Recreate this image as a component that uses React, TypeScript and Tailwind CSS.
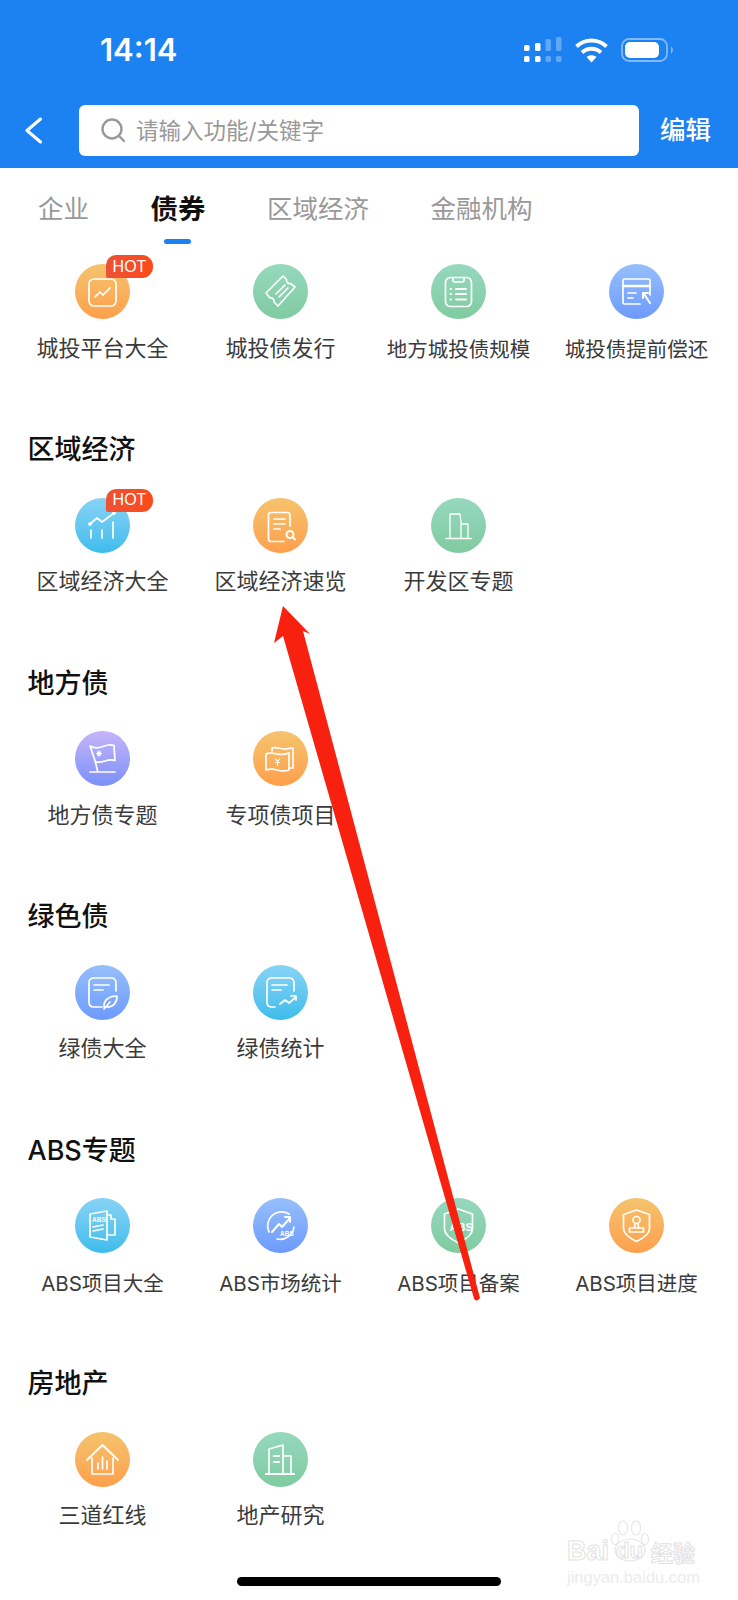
import type { ReactNode } from 'react'

type Tone = 'orange' | 'green' | 'blue' | 'sky' | 'purple'

const tones: Record<Tone, string> = {
  orange: 'bg-linear-to-b from-[#f5c36d] to-[#fd9f4c]',
  green: 'bg-linear-to-b from-[#96d8bf] to-[#80cba0]',
  blue: 'bg-linear-to-b from-[#97bffb] to-[#6d9afb]',
  sky: 'bg-linear-to-b from-[#86d3f5] to-[#3bbcec]',
  purple: 'bg-linear-to-b from-[#c6b4f8] to-[#7b90f8]',
}

const Glyph = ({ children }: { children: ReactNode }) => (
  <svg viewBox="0 0 55 55" className="w-[55px] h-[55px]" fill="none" stroke="white" strokeWidth="1.7" strokeLinecap="round" strokeLinejoin="round">
    {children}
  </svg>
)

const icons: Record<string, ReactNode> = {
  platform: (
    <Glyph>
      <rect x="14" y="15" width="27" height="27" rx="5" />
      <path d="M20 33l5-5 3 3 7-7" />
    </Glyph>
  ),
  ticket: (
    <Glyph>
      <path d="M13 29L30 12l3.500 3.500c-.5 2.500 1.500 4.500 4 4L42 23 25 42l-4-4c.5-2.500-1.500-4.500-4-4z" />
      <path d="M23 30l9-9M26 33l9-9" />
    </Glyph>
  ),
  clipboard: (
    <Glyph>
      <rect x="14.500" y="13.500" width="26" height="29" rx="5" />
      <path d="M22 13.500v3c0 1 .5 1.500 1.500 1.500h8c1 0 1.500-.5 1.500-1.500v-3" />
      <path d="M25 25h10M25 30h10M25 35.500h10M19.500 25h.6M19.500 30h.6M19.500 35.500h.6" strokeWidth="2" />
    </Glyph>
  ),
  card: (
    <Glyph>
      <path d="M41 31V16.500c0-1-.5-1.500-1.500-1.500h-24c-1 0-1.500.5-1.500 1.500v22c0 1 .5 1.500 1.500 1.500H31" />
      <path d="M14 22h27" strokeWidth="2.400" />
      <path d="M19 29h8M19 34h5" />
      <path d="M34 29h5M34 29v5M35 30l6 9" strokeWidth="2" />
    </Glyph>
  ),
  chart: (
    <Glyph>
      <path d="M15 26l7-6 5 4 12-9" />
      <path d="M16 32v8M27 32v8M38 24v16" />
      <circle cx="15" cy="26" r="1" fill="white" />
      <circle cx="39" cy="15" r="1" fill="white" />
    </Glyph>
  ),
  docSearch: (
    <Glyph>
      <path d="M37 28V17c0-1.500-.8-2.500-2.500-2.500H18c-1.500 0-2.500 1-2.500 2.500v24c0 1.500 1 2.500 2.500 2.500h13" />
      <path d="M21 21h11M21 26h11M21 31h6" />
      <circle cx="37" cy="36.500" r="3.500" strokeWidth="2" />
      <path d="M40 39.500l2 2" strokeWidth="2" />
    </Glyph>
  ),
  building: (
    <Glyph>
      <path d="M15 40.500h25" />
      <path d="M19 40V16h10l1 8v16M30 26h7v14" strokeWidth="1.300" />
    </Glyph>
  ),
  flag: (
    <Glyph>
      <path d="M15 15c5 3 9 2 13 .5 4-1.500 8-2 11-1l1 15c-3-1-7-.5-10 .5-2.500 1-6 1.500-9.500 1z" />
      <path d="M20.500 31l2 9M15 41h25" />
      <path d="M24 20v5M21.500 22.500h5M22.500 21l3 3M25.500 21l-3 3" strokeWidth="1.200" />
    </Glyph>
  ),
  money: (
    <Glyph>
      <path d="M19 20v-3c4-1.500 8 1 12 1s7-1 9-1v20h-4" />
      <path d="M13 23c3-1.500 7-1 11 0s8 .5 12-1v17c-4 1.500-8 1-12 0s-8-1-11 0z" />
      <path d="M22.500 28l2 2.500 2-2.500M24.500 30.500v4M22.500 31.500h4" strokeWidth="1.200" />
    </Glyph>
  ),
  noteLeaf: (
    <Glyph>
      <path d="M27 42h-8c-3 0-5-2-5-5V18c0-3 2-5 5-5h17c3 0 5 2 5 5v8" />
      <path d="M19 20h15M19 25h9" />
      <path d="M29 42c-.5-6 4-11 13-11 0 7-4 11-9.500 11-1.500 0-2.500 0-3.500 0zM29 44l6-7" />
    </Glyph>
  ),
  noteChart: (
    <Glyph>
      <path d="M22 42h-3c-3 0-5-2-5-5V18c0-3 2-5 5-5h17c3 0 5 2 5 5v8" />
      <path d="M19 20h15M19 25h9" />
      <path d="M27 39l5-4 4 3 7-6M38 31h5v4" />
    </Glyph>
  ),
  absDoc: (
    <Glyph>
      <path d="M15 16l17-3v29l-17-3z" />
      <path d="M32 17h4v4h4v16h-8" />
      <path d="M18 29l10-2M18 33l10-2" />
      <text x="17" y="24" fontSize="6.500" fontWeight="700" fill="white" stroke="none" fontFamily="Liberation Sans, sans-serif">ABS</text>
    </Glyph>
  ),
  absMarket: (
    <Glyph>
      <path d="M16 34a14 14 0 0 1 20-18M24 41a14 14 0 0 0 17-12" />
      <path d="M19 34l7-8 3 3 8-9M32 19h5v5" strokeWidth="2" />
      <text x="27" y="38" fontSize="6.500" fontWeight="700" fill="white" stroke="none" fontFamily="Liberation Sans, sans-serif">ABS</text>
    </Glyph>
  ),
  absShield: (
    <Glyph>
      <path d="M27.500 11l14 5v15c0 6-8 11-14 14-6-3-14-8-14-14V16z" />
      <text x="18.500" y="33" fontSize="11" fontWeight="700" fill="white" stroke="none" fontFamily="Liberation Sans, sans-serif">ABS</text>
    </Glyph>
  ),
  stamp: (
    <Glyph>
      <path d="M27.500 12l13 4.500v14c0 5.500-7 10-13 13-6-3-13-7.500-13-13v-14z" />
      <circle cx="27.500" cy="22" r="3.500" />
      <path d="M26 26l-.5 4h4l-.5-4M20.500 30h14v4h-14z" />
    </Glyph>
  ),
  house: (
    <Glyph>
      <path d="M12 28l15.500-15L43 28" strokeWidth="2" />
      <path d="M17 26v16h21V26" />
      <path d="M23 37v-6M27.500 37V25M32 37v-8" />
    </Glyph>
  ),
  tower: (
    <Glyph>
      <path d="M13 42h28" strokeWidth="2" />
      <path d="M16 42V17l14-4v29M30 24h8v18" />
      <path d="M21 24h5M21 30h5" strokeWidth="2" />
    </Glyph>
  ),
}

type Item = { label: string; icon: string; tone: Tone; hot?: boolean; small?: boolean }

const sections: { title?: string; items: Item[] }[] = [
  {
    items: [
      { label: '城投平台大全', icon: 'platform', tone: 'orange', hot: true },
      { label: '城投债发行', icon: 'ticket', tone: 'green' },
      { label: '地方城投债规模', icon: 'clipboard', tone: 'green', small: true },
      { label: '城投债提前偿还', icon: 'card', tone: 'blue', small: true },
    ],
  },
  {
    title: '区域经济',
    items: [
      { label: '区域经济大全', icon: 'chart', tone: 'sky', hot: true },
      { label: '区域经济速览', icon: 'docSearch', tone: 'orange' },
      { label: '开发区专题', icon: 'building', tone: 'green' },
    ],
  },
  {
    title: '地方债',
    items: [
      { label: '地方债专题', icon: 'flag', tone: 'purple' },
      { label: '专项债项目', icon: 'money', tone: 'orange' },
    ],
  },
  {
    title: '绿色债',
    items: [
      { label: '绿债大全', icon: 'noteLeaf', tone: 'blue' },
      { label: '绿债统计', icon: 'noteChart', tone: 'sky' },
    ],
  },
  {
    title: 'ABS专题',
    items: [
      { label: 'ABS项目大全', icon: 'absDoc', tone: 'sky', small: true },
      { label: 'ABS市场统计', icon: 'absMarket', tone: 'blue', small: true },
      { label: 'ABS项目备案', icon: 'absShield', tone: 'green', small: true },
      { label: 'ABS项目进度', icon: 'stamp', tone: 'orange', small: true },
    ],
  },
  {
    title: '房地产',
    items: [
      { label: '三道红线', icon: 'house', tone: 'orange' },
      { label: '地产研究', icon: 'tower', tone: 'green' },
    ],
  },
]

const tabs = ['企业', '债券', '区域经济', '金融机构']

function StatusIcons() {
  return (
    <div className="flex items-center">
      <svg width="38" height="26" viewBox="0 0 38 26" fill="white">
        <rect x="0" y="8" width="5.500" height="6" rx="1.500" />
        <rect x="11" y="6" width="5.500" height="8" rx="1.500" />
        <rect x="21.500" y="2" width="5.500" height="12" rx="1.500" opacity="0.3" />
        <rect x="32" y="0" width="5.500" height="14" rx="1.500" opacity="0.3" />
        <rect x="0" y="19" width="5.500" height="6" rx="1.500" />
        <rect x="11" y="19" width="5.500" height="6" rx="1.500" />
        <rect x="21.500" y="19" width="5.500" height="6" rx="1.500" opacity="0.3" />
        <rect x="32" y="19" width="5.500" height="6" rx="1.500" opacity="0.3" />
      </svg>
      <svg className="ml-[13px]" width="33" height="25" viewBox="0 0 33 25" fill="none" stroke="white" strokeWidth="3.800">
        <path d="M1.500 8.500c8.500-8 21.500-8 30 0" />
        <path d="M7 14.500c5.500-5 13.500-5 19 0" />
        <path d="M16.500 24.500l-5-5.500c3-2.500 7-2.500 10 0z" fill="white" stroke="none" />
      </svg>
      <svg className="ml-[13px]" width="54" height="24" viewBox="0 0 54 24" fill="none">
        <rect x="1" y="1" width="45" height="22" rx="7" stroke="white" strokeOpacity="0.45" strokeWidth="1.800" />
        <rect x="4" y="4" width="34" height="16" rx="5" fill="white" />
        <path d="M50 8.500c2.500.8 2.500 6.200 0 7z" fill="white" fillOpacity="0.45" />
      </svg>
    </div>
  )
}

function Entry({ item }: { item: Item }) {
  return (
    <div className="flex flex-col items-center">
      <div className={`relative w-[55px] h-[55px] rounded-full ${tones[item.tone]}`}>
        {icons[item.icon]}
        {item.hot && (
          <span className="absolute left-[31px] top-[-9px] w-[47px] h-[23px] flex items-center justify-center rounded-tl-[10px] rounded-tr-[11px] rounded-br-[11px] rounded-bl-[2px] bg-linear-to-r from-[#ec5235] to-[#fc4a16] text-white text-[16px] leading-none [font-family:'Liberation_Sans',sans-serif]">
            HOT
          </span>
        )}
      </div>
      <div className={`mt-[12.500px] h-[32px] text-[#3b3b3b] whitespace-nowrap ${item.small ? 'text-[20.500px] leading-[35px]' : 'text-[22px] leading-[32px]'}`}>{item.label}</div>
    </div>
  )
}

export default function App() {
  return (
    <div className="relative w-[738px] h-[1600px] overflow-hidden bg-white [font-family:'Inter','Noto_Sans_CJK_SC',sans-serif]">
      {/* ヘッダー */}
      <div className="h-[168px] bg-[#1c81f1]">
        <div className="h-[105px] flex items-start justify-between pt-[34px] pl-[100px] pr-[63px]">
          <span className="text-[31px] leading-[32px] font-semibold text-white">14:14</span>
          <div className="mt-[3px]">
            <StatusIcons />
          </div>
        </div>
        <div className="flex items-center h-[51px] pl-[24px]">
          <svg width="19" height="27" viewBox="0 0 19 27" fill="none" stroke="white" strokeWidth="3" strokeLinecap="round" strokeLinejoin="round">
            <path d="M16.500 2L3 13.500 16.500 25" />
          </svg>
          <div className="ml-[36px] w-[560px] h-[51px] flex items-center bg-white rounded-[6px] pl-[22px]">
            <svg width="25" height="25" viewBox="0 0 25 25" fill="none" stroke="#999" strokeWidth="2.400" strokeLinecap="round">
              <circle cx="11" cy="11" r="9.500" />
              <path d="M19 19l4 4" />
            </svg>
            <span className="ml-[10px] text-[22.500px] text-[#999]">请输入功能/关键字</span>
          </div>
          <span className="ml-[21px] text-[25.500px] font-medium text-white">编辑</span>
        </div>
      </div>

      {/* タブ */}
      <div className="flex items-center h-[80px] pl-[38px] gap-[61.500px]">
        {tabs.map((tab, i) => (
          <div key={tab} className="relative h-full flex items-center pt-[3px]">
            <span className={i === 1 ? 'text-[27.500px] font-bold text-[#111]' : 'text-[25.500px] text-[#999]'}>{tab}</span>
            {i === 1 && <span className="absolute left-[13px] top-[71px] w-[27px] h-[5px] rounded-full bg-[#1c81f1]" />}
          </div>
        ))}
      </div>

      {/* 一覧 */}
      <div className="pt-[16px] pl-[13.500px] pr-[12.500px]">
        {sections.map((section, i) => (
          <div key={i} className="mb-[68.600px]">
            {section.title && (
              <h2 className="h-[36px] leading-[36px] mb-[29.500px] pl-[14px] text-[27px] font-medium text-[#111]">{section.title}</h2>
            )}
            <div className="grid grid-cols-4">
              {section.items.map((item) => (
                <Entry key={item.label} item={item} />
              ))}
            </div>
          </div>
        ))}
      </div>

      {/* 赤い矢印 */}
      <svg className="absolute left-0 top-0 pointer-events-none" width="738" height="1600" viewBox="0 0 738 1600">
        <path d="M283 606L310 634 303 631 479.500 1296a3 3 0 0 1-5.500 2.500L283 636 274 643z" fill="#f8200f" />
      </svg>

      {/* 透かし */}
      <div className="absolute left-[567px] top-[1520px] w-[132px] h-[64px] text-[#ececec]">
        <svg className="absolute left-[44px] top-0" width="40" height="44" viewBox="0 0 40 44" fill="none" stroke="#e6e6e6" strokeWidth="1.200">
          <ellipse cx="12" cy="8" rx="4.500" ry="7" />
          <ellipse cx="25" cy="8" rx="4.500" ry="7" />
          <ellipse cx="4" cy="19" rx="3.500" ry="5.500" />
          <ellipse cx="34" cy="19" rx="3.500" ry="5.500" />
          <ellipse cx="19" cy="30" rx="15" ry="11" />
        </svg>
        <div className="absolute left-0 top-[16px] flex items-center h-[30px] w-[132px] [font-family:'Liberation_Sans',sans-serif] font-bold text-[27px] leading-none text-white [-webkit-text-stroke:1px_#e2e2e2]">
          <span>Bai</span>
          <span className="ml-[7px] text-[22px]">du</span>
          <span className="ml-[8px] text-[22px] [font-family:'Noto_Sans_CJK_SC',sans-serif]">经验</span>
        </div>
        <div className="absolute left-0 top-[49px] text-[16.500px] leading-[16px] whitespace-nowrap [font-family:'Liberation_Sans',sans-serif]">jingyan.baidu.com</div>
      </div>

      {/* ホームバー */}
      <div className="absolute left-[237px] top-[1577px] w-[264px] h-[9px] rounded-full bg-black" />
    </div>
  )
}
